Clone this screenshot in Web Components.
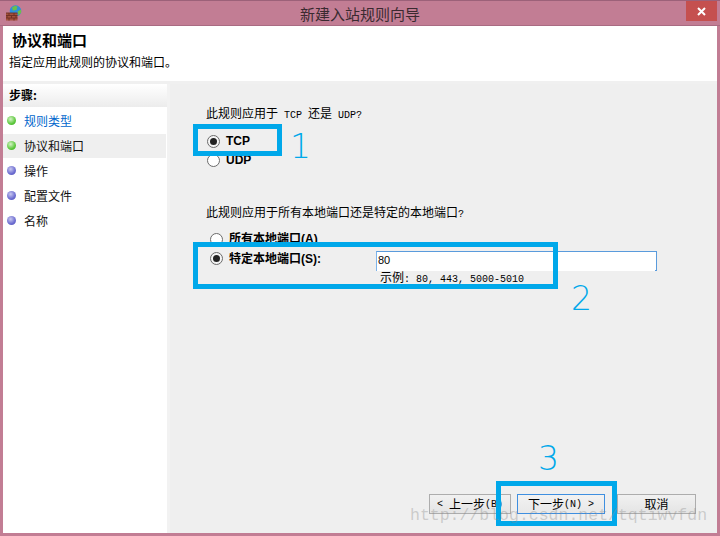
<!DOCTYPE html>
<html lang="zh"><head><meta charset="utf-8"><title>新建入站规则向导</title>
<style>
html,body{margin:0;padding:0;background:#c27d94}
body{width:720px;height:536px;overflow:hidden;font:12px "Noto Sans CJK SC","Liberation Sans",sans-serif;color:#000}
</style></head><body>
<x-wizard>
  <x-titlebar slot="title">新建入站规则向导</x-titlebar>
  <x-pagehead slot="head" heading="协议和端口">指定应用此规则的协议和端口。</x-pagehead>
  <x-steps slot="steps">
    <x-step state="done" link>规则类型</x-step>
    <x-step state="done" current>协议和端口</x-step>
    <x-step>操作</x-step>
    <x-step>配置文件</x-step>
    <x-step>名称</x-step>
  </x-steps>
  <x-panel slot="panel">
    <x-question style="margin-top:20px">此规则应用于<x-mono> TCP </x-mono>还是<x-mono> UDP?</x-mono></x-question>
    <x-radio style="margin:12px 0 0 1px" checked>TCP</x-radio>
    <x-radio style="margin:5px 0 0 1px">UDP</x-radio>
    <x-question style="margin-top:36px">此规则应用于所有本地端口还是特定的本地端口<x-mono>?</x-mono></x-question>
    <x-radio style="margin:11px 0 0 4px">所有本地端口(A)</x-radio>
    <x-portrow style="margin:5px 0 0 4px" value="80">特定本地端口(S):</x-portrow>
    <x-footer>
      <x-button style="width:82px"><x-mono>&lt; </x-mono>上一步<x-mono>(B)</x-mono></x-button>
      <x-button style="width:88px;margin-left:6px" primary>下一步<x-mono>(N) &gt;</x-mono></x-button>
      <x-button style="width:79px;margin-left:12px">取消</x-button>
    </x-footer>
  </x-panel>
  <x-callout slot="over" n="1" style="left:193px;top:124px;width:89px;height:32px" nx="97" ny="7"></x-callout>
  <x-callout slot="over" n="2" style="left:193px;top:242px;width:365px;height:47px" nx="378" ny="41"></x-callout>
  <x-callout slot="over" n="3" style="left:496px;top:481px;width:121px;height:45px" nx="42" ny="-38"></x-callout>
  <x-watermark slot="over">http://blog.csdn.net/tqtiwvfdn</x-watermark>
</x-wizard>
<script>
function def(name,html,init){
  customElements.define(name,class extends HTMLElement{
    constructor(){super();this.attachShadow({mode:'open'}).innerHTML=html;}
    connectedCallback(){if(init)init(this,this.shadowRoot);}
  });
}
const CJK='"Noto Sans CJK SC","Liberation Sans",sans-serif';
def('x-wizard',`<style>
:host{display:grid;position:relative;width:720px;height:536px;box-sizing:border-box;background:#c27d94;
 grid-template-columns:164px 3px 547px;grid-template-rows:26px 55px 3px 1fr;padding:0 3px 3px 3px;}
.t{grid-column:1/4;margin:0 -3px}
.h{grid-column:1/4}
.r{grid-column:1/4;background:#f0f0f0}
.g{background:#f2f2f2}
</style>
<div class="t"><slot name="title"></slot></div>
<div class="h"><slot name="head"></slot></div>
<div class="r"></div>
<slot name="steps"></slot><div class="g"></div><slot name="panel"></slot>
<slot name="over"></slot>`);
def('x-titlebar',`<style>
:host{display:flex;height:26px;position:relative;align-items:center;justify-content:center;background:#c27d94;border-top:1px solid #9c6179;border-bottom:1px solid #a96b82;box-sizing:border-box;
 font:15px ${CJK};color:#3a2a30}
svg.i{position:absolute;left:6px;top:4px}
.x{position:absolute;right:3px;top:0;width:31px;height:20px;background:#c5504f;display:flex;align-items:center;justify-content:center}
</style>
<svg class="i" width="16" height="16" viewBox="0 0 16 16">
 <circle cx="9.500" cy="6" r="5.800" fill="#2f8fd8"/>
 <path d="M6 2.500l3-1.800 2.500 1-1 3-3.500 1zM11.500 6.500l3.500-2 .2 3-2.500 3z" fill="#6cc04a"/>
 <path d="M0 8h11.500v7.500H0z" fill="#a4513c"/>
 <path d="M0 8h11.500M0 10.500h11.500M0 13h11.500M3 8v2.500M8 8v2.500M1 10.500V13M5.500 10.500V13M10 10.500V13M3 13v2.500M8 13v2.500" stroke="#6d2f22" stroke-width=".9" fill="none"/>
</svg>
<slot></slot>
<div class="x"><svg width="9" height="9" viewBox="0 0 9 9"><path d="M1 1l7 7M8 1L1 8" stroke="#fff" stroke-width="2"/></svg></div>`);
def('x-pagehead',`<style>
:host{display:flex;flex-direction:column;height:55px;background:#fff;box-sizing:border-box}
h1{margin:4px 0 0 9px;font:bold 15px/20px ${CJK};letter-spacing:0}
p{margin:3px 0 0 6px;font:12px/18px ${CJK};color:#000}
</style><h1></h1><p><slot></slot></p>`,(el,s)=>{s.querySelector('h1').textContent=el.getAttribute('heading');});
def('x-steps',`<style>
:host{display:flex;flex-direction:column;background:#fff}
.c{height:23px;box-sizing:border-box;padding:2px 0 0 6px;font:bold 12px/18px ${CJK};background:linear-gradient(#fff,#ececec)}
.l{padding-top:2px;display:flex;flex-direction:column;gap:1px}
</style><div class="c">步骤:</div><div class="l"><slot></slot></div>`);
def('x-step',`<style>
:host{display:flex;align-items:center;height:24px;font:12px/18px ${CJK};color:#111;margin-right:1px}
:host([current]){background:#efefef}
:host([link]){color:#0066cc}
i{display:block;width:9px;height:9px;border-radius:50%;margin:0 8px 0 4px;flex:none;
 background:radial-gradient(circle at 40% 35%,#c9c9f0,#6b6bd0 60%,#5656b8)}
:host([state=done]) i{background:radial-gradient(circle at 40% 35%,#d6f3c8,#5cc83c 60%,#3da428)}
i{position:relative;top:-1px}
</style><i></i><span><slot></slot></span>`);
def('x-panel',`<style>
:host{display:flex;flex-direction:column;background:#efefef;padding-left:36px;padding-bottom:19px;box-sizing:border-box;min-height:0}
</style><slot></slot>`);
def('x-question',`<style>:host{display:block;font:12px/18px ${CJK};color:#000;white-space:pre}</style><slot></slot>`);
def('x-mono',`<style>:host{font:10px "Liberation Mono",monospace;white-space:pre}</style><slot></slot>`);
const radio=`<span class="r"></span>`;
const radioCss=`.r{display:block;box-sizing:border-box;width:13px;height:13px;border-radius:50%;border:1px solid #6b6b6b;background:#fff;position:relative;flex:none;margin-right:6px}
:host([checked]) .r{background:#f4f4f4}
:host([checked]) .r::after{content:"";position:absolute;left:2px;top:2px;width:7px;height:7px;border-radius:50%;background:#222}`;
def('x-radio',`<style>
:host{display:flex;align-items:center;height:14px;font:bold 12px/14px "Liberation Sans",${CJK};color:#000}
${radioCss}
</style>${radio}<slot></slot>`);
def('x-portrow',`<style>
:host{display:flex;align-items:flex-start;font:bold 12px/16px "Liberation Sans",${CJK};color:#000}
${radioCss}
.r{margin-top:1px;background:#f4f4f4}
.r::after{content:"";position:absolute;left:2px;top:2px;width:7px;height:7px;border-radius:50%;background:#222}
.lab{width:147px;flex:none}
.col{display:flex;flex-direction:column;margin-top:0}
.in{position:relative;box-sizing:border-box;width:281px;height:20px;background:#fff;border:1px solid #5a9bdc;border-bottom:0;border-left-color:#7eb4ea;font:11px/17px "Liberation Sans",sans-serif;padding-left:1px;color:#000}
.in::after{content:"";position:absolute;right:-1px;bottom:0;width:2px;height:1px;background:#5a9bdc}
.hint{font:12px/14px ${CJK};font-weight:400;margin:-1px 0 0 4px;white-space:pre}
.hint b{font:10px "Liberation Mono",monospace;white-space:pre}
</style>${radio}<span class="lab"><slot></slot></span>
<div class="col"><div class="in"></div><div class="hint">示例<b>: 80, 443, 5000-5010</b></div></div>`,(el,s)=>{s.querySelector('.in').textContent=el.getAttribute('value');});
def('x-footer',`<style>:host{display:flex;margin-top:auto;margin-left:223px}</style><slot></slot>`);
def('x-button',`<style>
:host{display:flex;align-items:center;justify-content:center;box-sizing:border-box;height:20px;border:1px solid #adadad;background:linear-gradient(#f1f1f1,#e4e4e4);font:12px/18px ${CJK};color:#000;white-space:pre}
:host([primary]){border-color:#3f8fe0;background:linear-gradient(#f2f2f2,#e8e8e8)}
</style><slot></slot>`);
def('x-callout',`<style>
:host{position:absolute;box-sizing:border-box;display:block;border:5px solid #00a8ea}
span{position:absolute;font:200 33px/32px "DejaVu Sans","Open Sans",sans-serif;color:#00a8ea}
</style><span></span>`,(el,s)=>{const n=s.querySelector('span');n.textContent=el.getAttribute('n');n.style.left=(+el.getAttribute('nx')-5)+'px';n.style.top=(+el.getAttribute('ny')-5)+'px';});
def('x-watermark',`<style>
:host{position:absolute;left:410px;top:506px;font:16.500px/20px "Liberation Mono",monospace;color:rgba(135,135,135,.36);white-space:nowrap;pointer-events:none}
</style><slot></slot>`);
</script></body></html>
